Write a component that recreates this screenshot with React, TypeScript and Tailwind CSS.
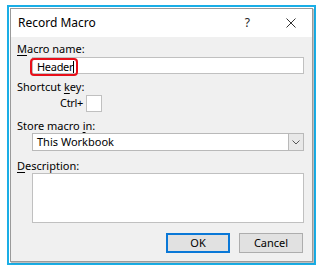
import React from "react";

const font = { fontFamily: '"Noto Sans", "Open Sans", sans-serif' };

const Label: React.FC<{ before: string; u: string; after: string }> = ({ before, u, after }) => (
  <div className="h-[14px] leading-[14px] text-[11px] text-black">
    {before}
    <span className="underline underline-offset-2">{u}</span>
    {after}
  </div>
);

const App: React.FC = () => {
  return (
    <div className="w-[322px] h-[272px] bg-white pt-[5px] pl-[7px]" style={font}>
      <div className="w-[309px] h-[260px] border-2 border-[#1aaee6] bg-white p-px">
        <div className="h-full flex flex-col border border-[#9a9a9a] shadow-[1px_1px_1px_rgba(0,0,0,0.25)]">
          {/* title bar */}
          <div className="h-[28px] bg-white flex items-center pl-[7px] pr-[16px]">
            <span className="text-[12px] text-black flex-1">Record Macro</span>
            <span className="text-[12px] text-[#222] mr-[36px]">?</span>
            <svg width="10" height="10" viewBox="0 0 10 10" className="stroke-[#333]">
              <path d="M0.5 0.5 L9.5 9.5 M9.5 0.5 L0.5 9.5" strokeWidth="1" fill="none" />
            </svg>
          </div>

          {/* body */}
          <div className="flex-1 bg-[#f0f0f0] pl-[6px] flex flex-col">
            <div className="mt-[5px]">
              <Label before="" u="M" after="acro name:" />
            </div>
            <div className="relative ml-[15px] mt-px w-[272px] h-[17px] bg-white border border-[#c0c0c0]">
              <div className="absolute left-[-3px] top-[0px] w-[48px] h-[18px] border-2 border-[#e8101a] rounded-[4px] flex items-center pl-[5px]">
                <span className="text-[11px] leading-[14px] text-black tracking-[-0.3px]">Header</span>
                <span className="w-px h-[12px] bg-black" />
              </div>
            </div>

            <div className="mt-[6px]">
              <Label before="Shortcut " u="k" after="ey:" />
            </div>
            <div className="flex items-center ml-[43px] h-[18px]">
              <span className="text-[11px] text-black w-[26px] tracking-[-0.3px]">Ctrl+</span>
              <div className="w-[16px] h-[17px] bg-white border border-[#c0c0c0]" />
            </div>

            <div className="mt-[7px]">
              <Label before="Store macro " u="i" after="n:" />
            </div>
            <div className="ml-[15px] w-[272px] h-[18px] bg-white border border-[#b9b9b9] flex items-center">
              <span className="flex-1 pl-[4px] text-[11px] text-black">This Workbook</span>
              <div className="w-[15px] h-full bg-[#e8e8e8] border-l border-[#b9b9b9] flex items-center justify-center">
                <svg width="8" height="5" viewBox="0 0 8 5">
                  <path d="M0.5 0.5 L4 4 L7.5 0.5" stroke="#555" strokeWidth="1" fill="none" />
                </svg>
              </div>
            </div>

            <div className="mt-[8px]">
              <Label before="" u="D" after="escription:" />
            </div>
            <div className="ml-[15px] w-[272px] h-[50px] bg-white border border-[#c0c0c0]" />

            <div className="flex ml-[149px] mt-[10px] gap-[9px]">
              <button className="w-[64px] h-[20px] bg-[#e1e1e1] border-2 border-[#0a78d7] text-[11px] text-black">
                OK
              </button>
              <button className="w-[64px] h-[20px] bg-[#e1e1e1] border border-[#adadad] text-[11px] text-black">
                Cancel
              </button>
            </div>
          </div>
        </div>
      </div>
    </div>
  );
};

export default App;
